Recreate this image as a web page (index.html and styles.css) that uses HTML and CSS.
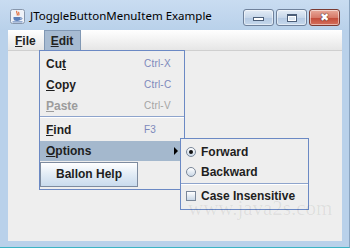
FILE: index.html
```html
<!DOCTYPE html>
<html lang="en">

<head>
  <meta charset="UTF-8">
  <title>JToggleButtonMenuItem Example</title>
  <link rel="stylesheet" href="styles.css">
</head>

<body>
  <div class="window">
    <div class="titlebar">
      <svg class="appIcon" width="15" height="15" viewBox="0 0 15 15">
        <rect x="0.5" y="0.5" width="14" height="14" rx="2" fill="#eef2f8" stroke="#8796ab"/>
        <path d="M7 2 C5.5 3.5 8.5 4.5 7 6.5 M9 3 C8 4 9.8 5 8.6 6.5" stroke="#e0612a" stroke-width="1.1" fill="none"/>
        <path d="M3.5 8 H10.5 V9.5 C10.5 11.2 9 12 7 12 C5 12 3.5 11.2 3.5 9.5 Z" fill="#5b7fb8"/>
        <path d="M10.5 8.6 C12.5 8.6 12.5 10.6 10.2 10.6" stroke="#5b7fb8" fill="none"/>
        <rect x="2.5" y="12.4" width="10" height="1" fill="#5b7fb8"/>
      </svg>
      <span class="title">JToggleButtonMenuItem Example</span>
      <div class="controls">
        <div class="ctl">
          <span class="minIcon"></span>
        </div>
        <div class="ctl">
          <span class="maxIcon"></span>
        </div>
        <div class="ctl close">
          <span class="closeIcon">&#x2716;</span>
        </div>
      </div>
    </div>

    <div class="client">
      <div class="menubar">
        <span class="menu"><u>F</u>ile</span>
        <span class="menu active"><u>E</u>dit</span>
      </div>
    </div>

    <div class="popup editMenu">
      <div class="item"><span>Cu<u>t</u></span><span class="accel">Ctrl-X</span></div>
      <div class="item"><span><u>C</u>opy</span><span class="accel">Ctrl-C</span></div>
      <div class="item disabled"><span><u>P</u>aste</span><span class="accel">Ctrl-V</span></div>
      <div class="sep"></div>
      <div class="item"><span><u>F</u>ind</span><span class="accel">F3</span></div>
      <div class="item selected"><span><u>O</u>ptions</span><span class="arrow"></span></div>
      <div class="balloon">Ballon Help</div>
    </div>

    <div class="popup subMenu">
      <div class="subItem"><span class="radio on"></span>Forward</div>
      <div class="subItem"><span class="radio"></span>Backward</div>
      <div class="sep"></div>
      <div class="subItem"><span class="check"></span>Case Insensitive</div>
    </div>

    <div class="watermark">www.java2s.com</div>
  </div>
</body>

</html>
```

FILE: styles.css
```css
* {
	margin: 0;
	padding: 0;
	box-sizing: border-box;
}

body {
	width: 350px;
	height: 248px;
	overflow: hidden;
	font-family: "Liberation Sans", Arial, sans-serif;
}

.window {
	position: relative;
	width: 350px;
	height: 248px;
	background: #b9d1ea;
	border-right: 1px solid #8aa4c0;
	border-bottom: 1px solid #3cb4c4;
	padding-bottom: 6px;
	display: flex;
	flex-direction: column;
}

.titlebar {
	height: 30px;
	display: flex;
	align-items: center;
	padding-left: 10px;
	background: linear-gradient(#c9dcf1, #b9d1ea);
}

.appIcon {
	display: block;
	margin-top: 2px;
}

.title {
	margin-left: 5px;
	font-family: "Noto Sans", "Open Sans", sans-serif;
	font-size: 11.5px;
	color: #000;
	flex: 1;
	margin-top: 1px;
}

.controls {
	display: flex;
	gap: 2px;
	margin-right: 9px;
	margin-top: 3px;
	align-self: flex-start;
	padding-top: 6px;
}

.ctl {
	width: 31px;
	height: 17px;
	border: 1px solid #6f819b;
	border-radius: 3px;
	background: linear-gradient(#e4ecf6, #c7d7ea 50%, #b3c8e2 51%, #c6d8ec);
	display: flex;
	align-items: center;
	justify-content: center;
	box-shadow: inset 0 0 0 1px rgba(255, 255, 255, .5);
}

.ctl.close {
	border-color: #7a3a32;
	background: linear-gradient(#e8a99a, #d77a69 50%, #c24a38 51%, #d5705c);
}

.minIcon {
	width: 11px;
	height: 4px;
	margin-top: 3px;
	background: #fff;
	border: 1px solid #4c5e78;
}

.maxIcon {
	width: 10px;
	height: 8px;
	border: 1px solid #4c5e78;
	border-top-width: 2px;
	background: #dde7f2;
	box-shadow: inset 0 0 0 1px #fff;
}

.closeIcon {
	color: #fff;
	font-size: 11px;
	line-height: 11px;
	text-shadow: 0 0 1px #4a1d17, 0 0 1px #4a1d17;
}

.client {
	flex: 1;
	margin: 0 7px 0 8px;
	background: #eeeeee;
}

.menubar {
	height: 21px;
	display: flex;
	background: linear-gradient(#ffffff, #f0f0f0 60%, #e6e6e6);
	border-bottom: 1px solid #cfcfcf;
	font-size: 12px;
	font-weight: bold;
}

.menu {
	padding: 0 7px 0 6px;
	line-height: 20px;
	color: #222;
	border: 1px solid transparent;
}

.menu.active {
	background: #a7bbd2;
	border-color: #8198b4;
	border-bottom: 0;
}

.popup {
	position: absolute;
	background: #eeeeee;
	border: 1px solid #6b89c4;
	font-size: 12px;
	font-weight: bold;
	color: #1e1e1e;
}

.editMenu {
	left: 39px;
	top: 50px;
	width: 146px;
	height: 140px;
	padding: 2px 0 1px;
}

.item {
	height: 21px;
	display: grid;
	grid-template-columns: 98px auto;
	align-items: center;
	padding-left: 6px;
}

.item.disabled {
	color: #9c9c9c;
}

.accel {
	font-size: 10px;
	font-weight: normal;
	color: #7d89bb;
	letter-spacing: 0.2px;
}

.item.disabled .accel {
	color: #a4a4a4;
}

.item.selected {
	height: 20px;
	margin-top: 1px;
	background: #a4b8cd;
}

.arrow {
	justify-self: end;
	margin-right: 6px;
	width: 0;
	height: 0;
	border-top: 4px solid transparent;
	border-bottom: 4px solid transparent;
	border-left: 4px solid #000;
}

.sep {
	height: 2px;
	margin: 0 0 3px;
	border-top: 1px solid #8ea4cc;
	border-bottom: 1px solid #fff;
}

.editMenu .sep {
	margin: 0 0 1px;
}

.balloon {
	margin: 1px 0 0;
	width: 98px;
	height: 25px;
	line-height: 23px;
	text-align: center;
	border: 1px solid #7d8b9f;
	background: linear-gradient(#ffffff, #e4edf6 45%, #c9dbed);
	color: #1e1e1e;
}

.subMenu {
	left: 180px;
	top: 138px;
	width: 129px;
	height: 72px;
	padding: 3px 0 1px;
}

.subItem {
	height: 20px;
	display: flex;
	align-items: center;
	gap: 5px;
	padding-left: 5px;
}

.subMenu .sep {
	margin: 1px 0 1px;
}

.radio {
	width: 10px;
	height: 10px;
	border-radius: 50%;
	border: 1px solid #7a8799;
	background: linear-gradient(#ffffff, #c9d7e6);
	display: flex;
	align-items: center;
	justify-content: center;
}

.radio.on::after {
	content: "";
	width: 4px;
	height: 4px;
	border-radius: 50%;
	background: #111;
}

.check {
	width: 10px;
	height: 10px;
	border: 1px solid #7a8799;
	background: linear-gradient(#ffffff, #c9d7e6);
}

.watermark {
	position: absolute;
	left: 188px;
	top: 196px;
	font-family: "Liberation Serif", serif;
	font-size: 21px;
	color: rgba(0, 0, 0, 0.07);
	pointer-events: none;
}
```
